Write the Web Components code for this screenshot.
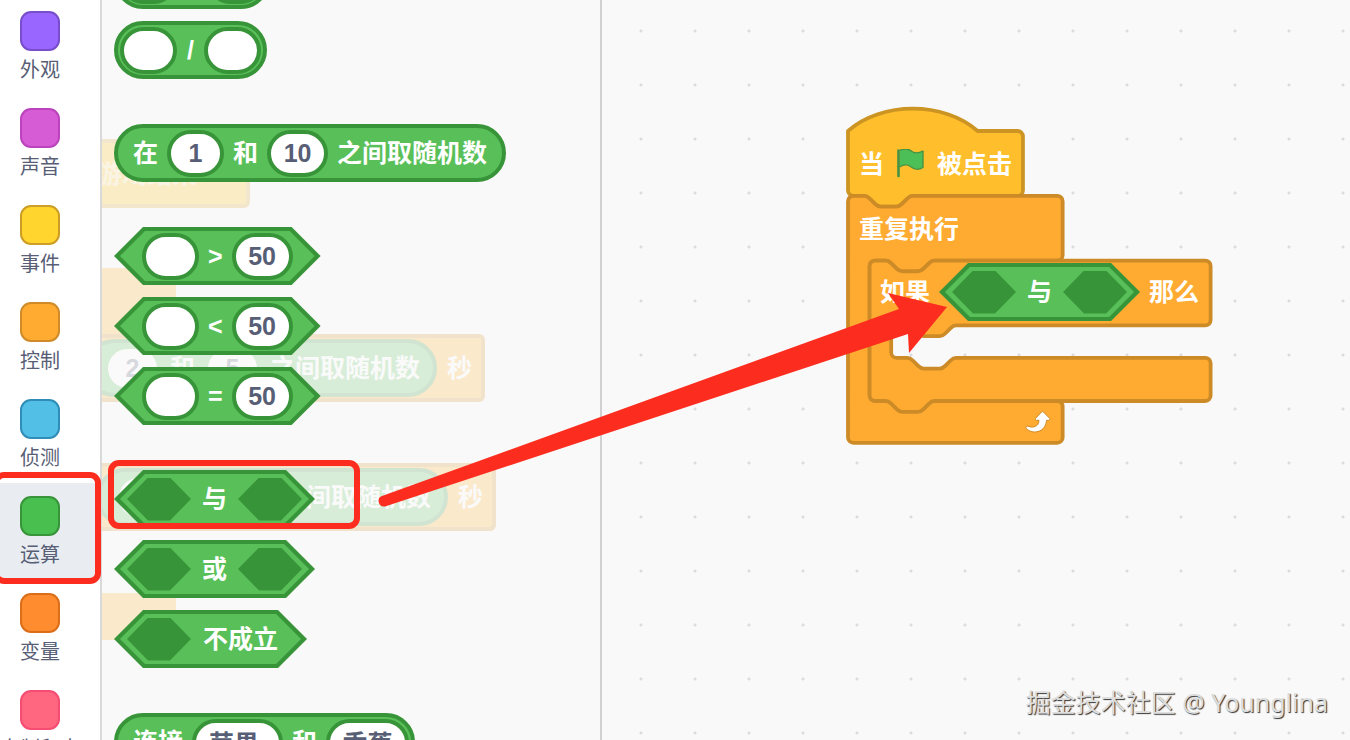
<!DOCTYPE html>
<html lang="zh-CN">
<head>
<meta charset="utf-8">
<title>Scratch 积木编辑器</title>
<style>
  html, body { margin: 0; height: 100%; overflow: hidden; }
  body { font-family: "Liberation Sans", "Noto Sans CJK SC", sans-serif; background: #f9f9f9; }
</style>
</head>
<body>
<block-editor></block-editor>

<script>
const define = (name, html, setup) => {
  const tpl = document.createElement('template');
  tpl.innerHTML = html;
  customElements.define(name, class extends HTMLElement {
    constructor() {
      super();
      this.attachShadow({ mode: 'open' }).append(tpl.content.cloneNode(true));
    }
    connectedCallback() { if (setup) setup(this, this.shadowRoot); }
  });
};

/* Category button: colour bubble with a caption */
define('category-item', `
  <style>
    :host { display: block; }
    button { all: unset; box-sizing: border-box; width: 100%; height: 97px; display: flex; flex-direction: column;
      align-items: center; gap: 6px; padding-top: 13px; padding-right: 20px; cursor: pointer;
      font-size: 20px; line-height: 26px; color: #575e75; white-space: nowrap; }
    :host([selected]) button { background: #e9edf2; }
    i { box-sizing: border-box; width: 40px; height: 40px; border-radius: 11px; border: 2px solid var(--edge); background: var(--fill); }
  </style>
  <button type="button"><i></i><slot></slot></button>`,
  (el) => {
    el.style.setProperty('--fill', el.getAttribute('fill'));
    el.style.setProperty('--edge', el.getAttribute('edge'));
  });

define('category-menu', `
  <style>
    :host { display: block; flex: none; width: 100px; background: #fff; border-right: 2px solid #d9d9d9; overflow: hidden; }
    nav { margin-top: -2px; }
  </style>
  <nav aria-label="积木分类"><slot></slot></nav>`);

/* Round value field; without a value it is an empty socket */
define('value-field', `
  <style>
    :host { display: block; flex: none; }
    input { display: block; box-sizing: border-box; width: var(--w, 57px); height: 47px; margin: 0; padding: 0;
      border: 4px solid #389438; border-radius: 24px; background: #fff; outline: none;
      font: 700 25px/39px "Liberation Sans", "Noto Sans CJK SC", sans-serif; color: #575e75; text-align: center; }
    :host([plain]) input { border-color: transparent; background-clip: padding-box; }
  </style>
  <input type="text" aria-label="参数">`,
  (el, root) => {
    root.querySelector('input').value = el.getAttribute('value') || '';
    if (el.hasAttribute('width')) el.style.setProperty('--w', el.getAttribute('width') + 'px');
  });

/* Empty hexagonal socket */
define('bool-socket', `
  <style>
    :host { display: block; flex: none; width: 64px; height: 43px; background: #389438;
      clip-path: polygon(21px 0, 43px 0, 100% 50%, 43px 100%, 21px 100%, 0 50%); }
  </style>`);

/* Round reporter block */
define('round-block', `
  <style>
    :host { display: flex; box-sizing: border-box; width: max-content; height: 58px; align-items: center; gap: 9px;
      padding: 0 15px; border: 4px solid #389438; border-radius: 29px; background: #59c059;
      font-size: 25px; line-height: 36px; font-weight: 700; color: #fff; white-space: nowrap; }
    :host([socket-start]) { padding-left: 2px; gap: 10px; }
    :host([socket-end]) { padding-right: 2px; }
  </style>
  <slot></slot>`);

/* Hexagonal boolean block */
define('bool-block', `
  <style>
    :host { display: block; width: max-content; height: 58px; background: #389438;
      clip-path: polygon(29px 0, calc(100% - 29px) 0, 100% 50%, calc(100% - 29px) 100%, 29px 100%, 0 50%); }
    div { display: flex; box-sizing: border-box; height: 50px; align-items: center; gap: 9px; padding: 0 22px;
      background: #59c059;
      clip-path: polygon(25px 0, calc(100% - 25px) 0, 100% 50%, calc(100% - 25px) 100%, 25px 100%, 0 50%);
      font-size: 25px; line-height: 36px; font-weight: 700; color: #fff; white-space: nowrap; }
    section { padding: 4px 6px; }
    :host([kind="logic"]) div { gap: 11px; padding: 0 7px; }
    :host([kind="not"]) div { gap: 12px; padding: 0 23px 0 7px; }
  </style>
  <section><div><slot></slot></div></section>`);

define('block-group', `
  <style>:host { display: flex; flex-direction: column; gap: 12px; }</style>
  <slot></slot>`);

/* Dimmed workspace scripts that show through the palette */
define('ghost-scripts', `
  <style>
    :host { position: absolute; inset: 0; overflow: hidden; opacity: .2; pointer-events: none;
      font-size: 25px; line-height: 36px; font-weight: 700; color: #fff; white-space: nowrap; }
    .hat, .body, .wait { position: absolute; left: -10px; box-sizing: border-box; border: 4px solid #cf8b17;
      border-radius: 6px; background: #ffab19; display: flex; align-items: center; justify-content: flex-end; }
    .hat { top: 139px; width: 158px; height: 69px; padding-right: 49px; background: #ffbf00; border-color: #dba520; }
    .hat span { opacity: .6; }
    .body { width: 84px; border-color: #ffab19; }
    .b1 { top: 268px; height: 68px; }
    .b2 { top: 593px; height: 47px; }
    .wait { height: 68px; gap: 10px; padding-right: 9px; }
    .wait round-block { padding-right: 13px; }
    .w1 { top: 334px; width: 393px; }
    .w2 { top: 463px; width: 404px; }
    .w2 value-field:first-child { margin-right: 34px; }
  </style>
  <div class="hat"><span>游戏结束</span></div>
  <div class="body b1"></div>
  <div class="wait w1">
    <round-block><value-field plain value="2"></value-field><span>和</span><value-field plain value="5"></value-field><span>之间取随机数</span></round-block>
    <span>秒</span>
  </div>
  <div class="wait w2">
    <round-block><value-field plain></value-field><value-field plain></value-field><span>之间取随机数</span></round-block>
    <span>秒</span>
  </div>
  <div class="body b2"></div>`);

define('block-palette', `
  <style>
    :host { display: block; position: relative; flex: none; width: 498px; background: #f9f9f9;
      border-right: 2px solid #d0d0d0; overflow: hidden; }
    main { position: relative; display: flex; flex-direction: column; gap: 45px; margin-top: -49px; padding-left: 12px; }
  </style>
  <ghost-scripts></ghost-scripts>
  <main><slot></slot></main>`);

/* Workspace script: outlines behind, rows of labels on top */
define('script-stack', `
  <style>
    :host { display: block; position: absolute; width: 366px; font-size: 25px; line-height: 36px; font-weight: 700; color: #fff; white-space: nowrap; }
    .shape { position: absolute; left: -2px; top: -26px; }
    .rows { position: relative; }
    .row { display: flex; align-items: center; height: 65px; padding-left: 11px; }
    .hat { gap: 13px; }
    .if { height: 62px; gap: 9px; padding-left: 32px; }
    .end { height: 42px; margin-top: 78px; width: 203px; padding: 0; justify-content: flex-end; }
    svg { display: block; flex: none; }
  </style>
  <svg class="shape" width="370" height="345" viewBox="-2 -26 370 345" aria-hidden="true">
    <g transform="scale(1.35)" stroke-width="2.8" stroke-linejoin="round">
      <path fill="#ffbf2c" stroke="#cc9422" d="M0,0 c25,-22 71,-22 96,0 H125.6 a4,4 0 0 1 4,4 V44 a4,4 0 0 1 -4,4 H48 c-2,0 -3,1 -4,2 l-4,4 c-1,1 -2,2 -4,2 h-12 c-2,0 -3,-1 -4,-2 l-4,-4 c-1,-1 -2,-2 -4,-2 H4 a4,4 0 0 1 -4,-4 z"/>
      <path fill="#ffab32" stroke="#cc8b27" transform="translate(0 48)" d="M0,4 a4,4 0 0 1 4,-4 H12 c2,0 3,1 4,2 l4,4 c1,1 2,2 4,2 h12 c2,0 3,-1 4,-2 l4,-4 c1,-1 2,-2 4,-2 H155 a4,4 0 0 1 4,4 V44 a4,4 0 0 1 -4,4 H64 c-2,0 -3,1 -4,2 l-4,4 c-1,1 -2,2 -4,2 h-12 c-2,0 -3,-1 -4,-2 l-4,-4 c-1,-1 -2,-2 -4,-2 h-8 a4,4 0 0 0 -4,4 V148 a4,4 0 0 0 4,4 H155 a4,4 0 0 1 4,4 V179 a4,4 0 0 1 -4,4 H4 a4,4 0 0 1 -4,-4 z"/>
      <path fill="#ffab32" stroke="#cc8b27" transform="translate(16 96)" d="M0,4 a4,4 0 0 1 4,-4 H12 c2,0 3,1 4,2 l4,4 c1,1 2,2 4,2 h12 c2,0 3,-1 4,-2 l4,-4 c1,-1 2,-2 4,-2 H248.6 a4,4 0 0 1 4,4 V44 a4,4 0 0 1 -4,4 H64 c-2,0 -3,1 -4,2 l-4,4 c-1,1 -2,2 -4,2 h-12 c-2,0 -3,-1 -4,-2 l-4,-4 c-1,-1 -2,-2 -4,-2 h-8 a4,4 0 0 0 -4,4 V68 a4,4 0 0 0 4,4 h8 c2,0 3,1 4,2 l4,4 c1,1 2,2 4,2 h12 c2,0 3,-1 4,-2 l4,-4 c1,-1 2,-2 4,-2 H248.6 a4,4 0 0 1 4,4 V100 a4,4 0 0 1 -4,4 H48 c-2,0 -3,1 -4,2 l-4,4 c-1,1 -2,2 -4,2 h-12 c-2,0 -3,-1 -4,-2 l-4,-4 c-1,-1 -2,-2 -4,-2 H4 a4,4 0 0 1 -4,-4 z"/>
    </g>
  </svg>
  <div class="rows">
    <div class="row hat">
      <span>当</span>
      <svg width="27" height="30" viewBox="0 0 27 30" aria-label="绿旗">
        <path d="M2.500 1.500C8 -1 12 0 15 2.500C18 4.500 22 4.200 26 2V18.500C22 21 17 20.500 13.500 17.500C10 15 6.500 15.500 2.500 18" fill="#4cbf56" stroke="#459245" stroke-width="1.300" stroke-linejoin="round"/>
        <path d="M1.500 1.500V27" stroke="#459245" stroke-width="2.600" stroke-linecap="round"/>
      </svg>
      <span>被点击</span>
    </div>
    <div class="row"><span>重复执行</span></div>
    <div class="row if">
      <span>如果</span>
      <bool-block kind="logic"><bool-socket></bool-socket><span>与</span><bool-socket></bool-socket></bool-block>
      <span>那么</span>
    </div>
    <div class="row end">
      <svg width="26" height="24" viewBox="0 0 26 24" aria-hidden="true">
        <path d="M16.500 2Q17.500 .8 18.500 2L24.800 8.500Q25.200 10 23.500 10.300H21.500C21.300 17 16.500 22 9.500 22C6 22 3.200 20.500 1.300 18.500C.4 17 1.600 15.600 3 16.200C8.500 18.300 13.800 16.500 14 10.300H11.500Q9.800 10 10.500 8.500Z" fill="#fff" stroke="#cf8b27" stroke-width="1"/>
      </svg>
    </div>
  </div>`);

define('work-space', `
  <style>
    :host { display: block; position: relative; flex: 1; min-width: 0; overflow: hidden; background-color: #f9f9f9;
      background-image: radial-gradient(circle at 27px 27px, #dcdcdc 1px, transparent 2px);
      background-size: 54px 54px; background-position: 12px 4px; }
    script-stack { left: 246px; top: 131px; }
    footer { position: absolute; right: 22px; bottom: 20px; font-family: "Noto Sans", "Noto Sans CJK SC", sans-serif; font-size: 25px; line-height: 36px;
      color: #dedede; text-shadow: 1px 1px 1px #333; white-space: nowrap; }
  </style>
  <script-stack></script-stack>
  <footer>掘金技术社区 @ Younglina</footer>`);

/* Red highlight frames and the drag arrow */
define('red-marks', `
  <style>
    :host { position: absolute; inset: 0; pointer-events: none; overflow: hidden; }
    svg { display: block; }
  </style>
  <svg width="960" height="600" viewBox="0 0 960 600" aria-hidden="true">
    <g fill="none" stroke="#fc2d1f" stroke-width="6">
      <rect x="-4" y="475" width="102" height="106" rx="8"/>
      <rect x="111" y="463" width="246" height="63" rx="8"/>
    </g>
    <path fill="#fc2d1f" d="M382 496L899 309L888 293L947 307L909 353L908 334L385 506.500A5.500 5.500 0 0 1 382 496Z"/>
  </svg>`);

define('block-editor', `
  <style>
    :host { display: flex; position: relative; height: 100vh; overflow: hidden; }
  </style>
  <category-menu>
    <category-item fill="#9966ff" edge="#774dcb">外观</category-item>
    <category-item fill="#d65cd6" edge="#bd42bd">声音</category-item>
    <category-item fill="#ffd52e" edge="#cc9e25">事件</category-item>
    <category-item fill="#ffab32" edge="#cf8b27">控制</category-item>
    <category-item fill="#52c0e6" edge="#2e8eb8">侦测</category-item>
    <category-item fill="#49bf50" edge="#389438" selected>运算</category-item>
    <category-item fill="#ff8c2e" edge="#db6e18">变量</category-item>
    <category-item fill="#ff6680" edge="#f54d71">自制积木</category-item>
  </category-menu>
  <block-palette>
    <block-group>
      <round-block socket-start socket-end><value-field></value-field><span>*</span><value-field></value-field></round-block>
      <round-block socket-start socket-end><value-field></value-field><span>/</span><value-field></value-field></round-block>
    </block-group>
    <block-group>
      <round-block><span>在</span><value-field value="1"></value-field><span>和</span><value-field value="10" width="61"></value-field><span>之间取随机数</span></round-block>
    </block-group>
    <block-group>
      <bool-block><value-field></value-field><span>&gt;</span><value-field value="50" width="61"></value-field></bool-block>
      <bool-block><value-field></value-field><span>&lt;</span><value-field value="50" width="61"></value-field></bool-block>
      <bool-block><value-field></value-field><span>=</span><value-field value="50" width="61"></value-field></bool-block>
    </block-group>
    <block-group>
      <bool-block kind="logic"><bool-socket></bool-socket><span>与</span><bool-socket></bool-socket></bool-block>
      <bool-block kind="logic"><bool-socket></bool-socket><span>或</span><bool-socket></bool-socket></bool-block>
      <bool-block kind="not"><bool-socket></bool-socket><span>不成立</span></bool-block>
    </block-group>
    <block-group>
      <round-block socket-end><span>连接</span><value-field value="苹果 " width="91"></value-field><span>和</span><value-field value="香蕉" width="83"></value-field></round-block>
    </block-group>
  </block-palette>
  <work-space></work-space>
  <red-marks></red-marks>`);
</script>
</body>
</html>
